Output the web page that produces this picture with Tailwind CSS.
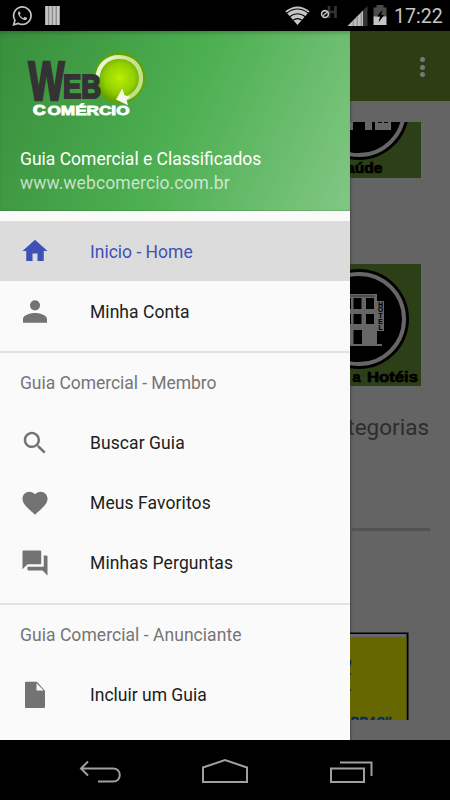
<!DOCTYPE html>
<html lang="pt-BR">
<head>
<meta charset="utf-8">
<meta name="viewport" content="width=device-width, initial-scale=1">
<title>WebComércio</title>
<script src="https://cdn.jsdelivr.net/npm/@tailwindcss/browser@4"></script>
</head>
<body class="bg-black">
<div class="flex h-[800px] w-[450px] flex-col overflow-hidden bg-black font-['Roboto',sans-serif] text-[17.5px]">

  <!-- Status bar -->
  <header class="flex h-[31px] shrink-0 items-center justify-between bg-black">
    <svg class="h-[31px] w-[70px]" viewBox="0 0 70 31" fill="none">
      <path d="M13.700 24.700l1.200-4.500a8.700 8.700 0 1 1 3.400 3.200z" stroke="#c4c4c4" stroke-width="1.700"/>
      <path d="M19.200 11.300c-1.300.6-1.500 2.200-.7 3.800 1.200 2.500 3.300 4.400 5.800 5 1.500.3 2.700-.5 2.900-2l-2.600-1.300-1.300 1.400c-1.800-.8-2.900-2-3.600-3.500l1-1.200z" fill="#c4c4c4"/>
      <path d="M45 6h15v19H45z" fill="#8c8c8c"/>
      <path d="M46.700 6v19M50.500 6v19M54.300 6v19M58.100 6v19" stroke="#c8c8c8" stroke-width="2.300"/>
    </svg>
    <div class="flex items-center">
      <svg class="h-[31px] w-[110px]" viewBox="280 0 110 31" fill="none">
        <path d="M285.300 11.300Q297.500 1.500 309.600 11.300L297.500 25z" fill="#c6c6c6"/>
        <path d="M286.500 13.300q11-8.500 22 0M289.500 16.800q8-6 16 0M292.800 20.400q4.700-3.500 9.400 0" stroke="#000" stroke-width="1.100"/>
        <path d="M329 6v12M335.500 6v12M329 12h6.500" stroke="#343434" stroke-width="2.600"/>
        <circle cx="325" cy="14" r="3.400" stroke="#c6c6c6" stroke-width="1.600"/>
        <path d="M323 15.800l4-3.600" stroke="#c6c6c6" stroke-width="1.300"/>
        <path d="M367.500 6v20H348z" fill="#353535"/>
        <path d="M363 10.600V26H347.500z" fill="#bdbdbd"/>
        <path d="M353.200 20v6M357.200 16v10M361.200 13v13" stroke="#858585"/>
        <path d="M373.500 7.500h3V5h7v2.500h3V17h-13z" fill="#4b4b4b"/>
        <path d="M373.500 16.500h13V25h-13z" fill="#c6c6c6"/>
        <path d="M382.500 9.500l-5.500 7h3l-1.500 6 5.700-7.500h-3z" fill="#000"/>
      </svg>
      <span class="w-[60px] whitespace-nowrap pl-[4px] pt-px text-[19.6px] leading-[31px] text-[#c6c6c6]">17:22</span>
    </div>
  </header>

  <main class="flex h-[709px] shrink-0">
    <!-- Navigation drawer -->
    <nav class="flex w-[350px] shrink-0 flex-col bg-[#fafafa]">
      <section class="flex h-[180px] shrink-0 flex-col bg-[linear-gradient(114deg,#388e3c_0%,#4caf50_50%,#81c784_100%)] px-5 pt-[20px] shadow-[inset_0_4px_5px_-3px_rgba(0,0,0,0.3),inset_0_-1px_0_rgba(0,0,0,0.1)]">
        <svg class="-ml-5 h-[70px] w-[170px]" viewBox="0 51 170 70">
          <defs>
            <radialGradient id="orb"><stop stop-color="#b9ef00"/><stop offset=".55" stop-color="#94d000"/><stop offset=".87" stop-color="#65a500"/><stop offset=".94" stop-color="#61a005"/><stop offset="1" stop-color="#61a908" stop-opacity=".2"/></radialGradient>
            <linearGradient id="arrow" gradientUnits="userSpaceOnUse" x1="98" y1="60" x2="142" y2="78"><stop stop-color="#f5faea"/><stop offset=".5" stop-color="#cde69c"/><stop offset="1" stop-color="#c0df88"/></linearGradient>
          </defs>
          <circle cx="119.500" cy="78" r="26.500" fill="url(#orb)"/>
          <path d="M97.500 77C99 64 108 57 119 57c13 0 22 9 22 21.500 0 9-6 17-15 20" fill="none" stroke="url(#arrow)" stroke-width="4.200"/>
          <path d="M122.300 88.500l-6.300 11 12 5.800-1.500-5.500 3.500-3-5.500-1.500z" fill="#f5faea"/>
          <g fill="#333" stroke="#333" font-family="'Liberation Sans',sans-serif" font-weight="700">
            <text x="28.500" y="100" font-size="55" textLength="36" lengthAdjust="spacingAndGlyphs" stroke-width="2.500">W</text>
            <text x="63" y="97.500" font-size="34" textLength="38" lengthAdjust="spacingAndGlyphs" stroke-width="2.200">EB</text>
          </g>
          <g fill="#fff" stroke="#fff" font-family="'Liberation Sans',sans-serif" font-weight="700">
            <text x="33" y="115.200" font-size="15" textLength="12.500" lengthAdjust="spacingAndGlyphs" stroke-width="1.200">C</text>
            <text x="47.500" y="115.200" font-size="12.500" textLength="82" lengthAdjust="spacingAndGlyphs" stroke-width=".8">OMÉRCIO</text>
          </g>
        </svg>
        <p class="mt-[26px] h-6 whitespace-nowrap leading-6 text-white">Guia Comercial e Classificados</p>
        <p class="h-6 whitespace-nowrap leading-6 tracking-[0.09px] text-white/70">www.webcomercio.com.br</p>
      </section>

      <ul class="flex flex-col pt-[10px] text-[#202020]">
        <li class="flex h-[60px] items-center bg-[#dcdcdc] pl-5 text-[#3f51b5]">
          <svg class="mr-10 size-[30px]" viewBox="0 0 24 24" fill="currentColor"><path d="M10 20v-6h4v6h5v-8h3L12 3 2 12h3v8z"/></svg><span class="pt-[2px]">Inicio - Home</span>
        </li>
        <li class="flex h-[60px] items-center pl-5">
          <svg class="mr-10 size-[30px] text-[#737373]" viewBox="0 0 24 24" fill="currentColor"><path d="M12 11.500a4.050 4.050 0 1 0 0-8.100 4.050 4.050 0 0 0 0 8.100zm0 2.100c-3.200 0-9.600 1.500-9.600 4.800v3h19.200v-3c0-3.300-6.400-4.800-9.600-4.800z"/></svg><span class="pt-[2px] tracking-[0.05px]">Minha Conta</span>
        </li>
      </ul>
      <h2 class="mt-[10px] flex h-[62px] shrink-0 items-center border-t-2 border-[#e3e3e3] pl-5 tracking-[-0.05px] text-[#757575]">Guia Comercial - Membro</h2>
      <ul class="flex flex-col text-[#202020]">
        <li class="flex h-[60px] items-center pl-5">
          <svg class="mr-10 size-[30px] text-[#737373]" viewBox="0 0 24 24" fill="currentColor"><path d="M15.500 14h-.79l-.28-.27C15.410 12.590 16 11.110 16 9.500 16 5.910 13.090 3 9.500 3S3 5.910 3 9.500 5.910 16 9.500 16c1.610 0 3.090-.59 4.230-1.570l.27.28v.79l5 4.990L20.490 19l-4.990-5zm-6 0C7.010 14 5 11.990 5 9.500S7.010 5 9.500 5 14 7.010 14 9.500 11.990 14 9.500 14z"/></svg><span class="tracking-[0.08px]">Buscar Guia</span>
        </li>
        <li class="flex h-[60px] items-center pl-5">
          <svg class="mr-10 size-[30px] text-[#737373]" viewBox="0 0 24 24" fill="currentColor"><path d="M12 21.350l-1.450-1.320C5.400 15.360 2 12.280 2 8.500 2 5.420 4.420 3 7.500 3c1.740 0 3.410.81 4.500 2.090C13.090 3.810 14.760 3 16.500 3 19.580 3 22 5.420 22 8.500c0 3.780-3.400 6.860-8.550 11.540L12 21.350z"/></svg><span class="tracking-[0.1px]">Meus Favoritos</span>
        </li>
        <li class="flex h-[60px] items-center pl-5">
          <svg class="mr-10 size-[30px] text-[#737373]" viewBox="0 0 24 24" fill="currentColor"><path d="M21 6h-2v9H6v2c0 .55.45 1 1 1h11l4 4V7c0-.55-.45-1-1-1zm-4 6V3c0-.55-.45-1-1-1H3c-.55 0-1 .45-1 1v14l4-4h10c.55 0 1-.45 1-1z"/></svg><span class="tracking-[0.12px]">Minhas Perguntas</span>
        </li>
      </ul>
      <h2 class="mt-[10px] flex h-[62px] shrink-0 items-center border-t-2 border-[#e3e3e3] pl-5 tracking-[0.05px] text-[#757575]">Guia Comercial - Anunciante</h2>
      <ul class="flex flex-col text-[#202020]">
        <li class="flex h-[60px] items-center pl-5">
          <svg class="mr-10 size-[30px] text-[#737373]" viewBox="0 0 24 24" fill="currentColor"><path d="M4.800 1.300Q4 1.300 4 2.100v19.500q0 .8.800.8h14.400q.8 0 .8-.8V8.500l-6.500-7.200zM13.200 2.500L19 8.300h-5.800z"/></svg><span>Incluir um Guia</span>
        </li>
      </ul>
    </nav>

    <!-- Dimmed page behind the drawer -->
    <section class="flex w-[100px] flex-col bg-[#646464] shadow-[inset_3px_0_3px_-2px_rgba(0,0,0,0.3)]">
      <div class="flex h-[70px] shrink-0 items-center justify-end bg-[#2c3c13] pr-[25px] pt-[2px]">
        <div class="flex flex-col gap-[2.5px]"><i class="size-[5px] rounded-full bg-[#777]"></i><i class="size-[5px] rounded-full bg-[#777]"></i><i class="size-[5px] rounded-full bg-[#777]"></i></div>
      </div>
      <svg class="mt-[21px] h-[56px] w-[71px] shrink-0" viewBox="350 122 71 56">
        <path d="M350 122h71v56h-71z" fill="#2c3f17"/>
        <circle cx="359" cy="110" r="50" fill="#000"/>
        <circle cx="359" cy="110" r="45" fill="none" stroke="#666" stroke-width="4"/>
        <path d="M350 122h3v8h-3zM365 122h7v8h-7zM375 122h16v8h-16z" fill="#666"/>
        <path d="M378 122.500h4M384 122.500h4" stroke="#000"/>
        <text x="346" y="173" font-family="'Liberation Sans',sans-serif" font-weight="700" font-size="14" textLength="36.500" lengthAdjust="spacingAndGlyphs" stroke="#000" stroke-width=".7">aúde</text>
      </svg>
      <svg class="mt-[86px] h-[122px] w-[71px] shrink-0" viewBox="350 264 71 122">
        <path d="M350 264h71v122h-71z" fill="#2c3f17"/>
        <circle cx="359" cy="319" r="50" fill="#000"/>
        <circle cx="359" cy="319" r="45" fill="none" stroke="#666" stroke-width="4"/>
        <path d="M350 294h27v50h5v2h-32z" fill="#666"/>
        <path d="M350 296h25" stroke="#333"/>
        <path d="M353.500 298h8v11h-8zM366 298h8v11h-8zM353.500 314h8v10h-8zM366 314h8v10h-8zM353.500 330h8.500v14h-8.500zM350 298h1v11h-1zM350 314h1v10h-1z" fill="#000"/>
        <path d="M377 301h7v30h-7z" fill="#666"/>
        <g font-family="'Liberation Sans',sans-serif" font-weight="700" font-size="6.500" text-anchor="middle" stroke="#000" stroke-width=".2"><text x="380.500" y="306.500">H</text><text x="380.500" y="312.300">O</text><text x="380.500" y="318">T</text><text x="380.500" y="324">E</text><text x="380.500" y="330">L</text></g>
        <g font-family="'Liberation Sans',sans-serif" font-weight="700" font-size="14.300" stroke="#000" stroke-width=".7"><text x="352.500" y="381.500" textLength="8" lengthAdjust="spacingAndGlyphs">a</text><text x="367" y="381.500" textLength="51" lengthAdjust="spacingAndGlyphs">Hotéis</text></g>
      </svg>
      <div class="mt-[25px] flex h-[32px] shrink-0 justify-end overflow-hidden whitespace-nowrap pr-[21px] text-[22.5px] leading-[32px] text-[#2d2d2d]">Categorias</div>
      <div class="mt-[85px] h-[3px] w-[80px] shrink-0 bg-[#525252]"></div>
      <svg class="mt-[101px] h-[88px] w-[59px] shrink-0" viewBox="350 632 59 88">
        <path d="M350 632.500h58.500V720H350z" fill="#000"/>
        <path d="M350 634h56.500v86H350z" fill="#666"/>
        <path d="M350 637h56.500v83H350z" fill="#666700"/>
        <path d="M350 659q3 2 0 8zM350 673h1v2h-1zM350 689h1v2h-1z" fill="#102b3e"/>
        <text x="350" y="727" font-family="'Liberation Sans',sans-serif" font-weight="700" font-style="italic" font-size="15" textLength="45" lengthAdjust="spacingAndGlyphs" fill="#062e66" stroke="#062e66" stroke-width=".6">BRASIL</text>
      </svg>
    </section>
  </main>

  <!-- System navigation -->
  <footer class="h-[60px] shrink-0 bg-black">
    <svg class="h-[60px] w-[450px]" viewBox="0 740 450 60" fill="none" stroke="#a0a0a0" stroke-width="2">
      <path d="M88 761.500l-7 7 7 7M81 768.500h32c9 0 9 13 0 13H98"/>
      <path d="M203 767.500l22-7.500 22 7.500V782h-44z"/>
      <path d="M331 768.500h33V782h-33zM340 762.500h31.500V776"/>
    </svg>
  </footer>
</div>
</body>
</html>
